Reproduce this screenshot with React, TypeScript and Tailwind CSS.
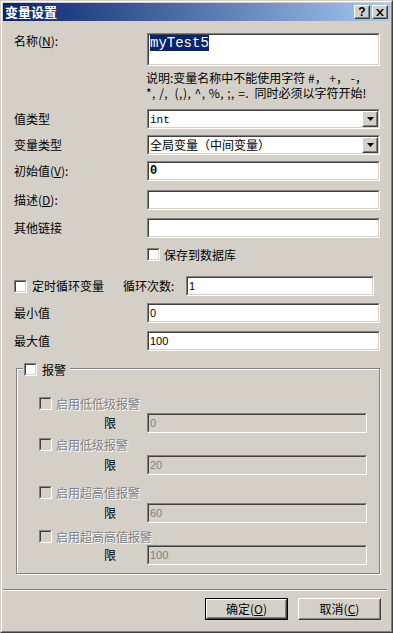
const sunkenOuter = "border border-t-[#808080] border-l-[#808080] border-r-white border-b-white";
const sunkenInner = "border border-t-[#404040] border-l-[#404040] border-r-[#d4d0c8] border-b-[#d4d0c8]";
const raisedOuter = "border border-t-white border-l-white border-r-[#404040] border-b-[#404040]";
const raisedInner = "border border-t-[#d4d0c8] border-l-[#d4d0c8] border-r-[#808080] border-b-[#808080]";

const grayText = "text-[#808080] [text-shadow:1px_1px_0_#fff]";

type FieldProps = {
  w?: string;
  h?: string;
  disabled?: boolean;
  children?: React.ReactNode;
};

const Field = ({ w = "w-[233px]", h = "h-[20px]", disabled, children }: FieldProps) => (
  <div className={`${sunkenOuter} ${w} ${h} shrink-0`}>
    <div
      className={`${sunkenInner} h-full flex items-center pl-[1px] text-[11px] font-['Liberation_Sans',sans-serif] ${
        disabled ? "bg-[#d4d0c8] text-[#808080]" : "bg-white text-black"
      }`}
    >
      {children}
    </div>
  </div>
);

const Check = ({ disabled }: { disabled?: boolean }) => (
  <div className={`${sunkenOuter} w-[13px] h-[13px] shrink-0`}>
    <div className={`${sunkenInner} h-full ${disabled ? "bg-[#d4d0c8]" : "bg-white"}`} />
  </div>
);

const Combo = ({ children }: { children: React.ReactNode }) => (
  <div className={`${sunkenOuter} w-[233px] h-[20px] shrink-0`}>
    <div className={`${sunkenInner} h-full bg-white flex items-center`}>
      <div className="flex-1 pl-[1px] whitespace-nowrap">{children}</div>
      <div className={`${raisedOuter} w-[16px] h-[16px] shrink-0`}>
        <div className={`${raisedInner} h-full bg-[#d4d0c8] flex items-center justify-center`}>
          <svg width="7" height="4" viewBox="0 0 7 4">
            <path d="M0 0h7l-3.5 4z" fill="#000" />
          </svg>
        </div>
      </div>
    </div>
  </div>
);

const Btn = ({ children, isDefault }: { children: React.ReactNode; isDefault?: boolean }) => (
  <div className={`w-[83px] h-[22px] ${isDefault ? "border border-black" : ""}`}>
    <div className={`${raisedOuter} h-full`}>
      <div className={`${raisedInner} h-full bg-[#d4d0c8] flex items-center justify-center text-[12px]`}>
        {children}
      </div>
    </div>
  </div>
);

const TitleBtn = ({ children }: { children: React.ReactNode }) => (
  <div className={`${raisedOuter} w-[16px] h-[14px]`}>
    <div className={`${raisedInner} h-full bg-[#d4d0c8] flex items-center justify-center`}>{children}</div>
  </div>
);

const Row = ({ label, mt, children }: { label: React.ReactNode; mt: string; children: React.ReactNode }) => (
  <div className={`flex items-center ${mt}`}>
    <div className="w-[133px] shrink-0">{label}</div>
    {children}
  </div>
);

const U = ({ c }: { c: string }) => <span className="underline underline-offset-1">{c}</span>;

const AlarmRow = ({ label, value, mt }: { label: string; value: string; mt: [string, string] }) => (
  <>
    <div className={`flex items-center h-[13px] pl-[22px] ${mt[0]}`}>
      <Check disabled />
      <span className={`ml-[4px] ${grayText}`}>{label}</span>
    </div>
    <div className={`flex items-center pl-[87px] ${mt[1]}`}>
      <span className="w-[43px]">限</span>
      <Field w="w-[220px]" disabled>
        {value}
      </Field>
    </div>
  </>
);

export default function App() {
  return (
    <div className="w-[393px] h-[633px] bg-[#d4d0c8] border border-t-[#d4d0c8] border-l-[#d4d0c8] border-r-[#404040] border-b-[#404040] font-['Noto_Sans_CJK_SC',sans-serif] text-[12px] leading-[14px] text-black">
      <div className="h-full border border-t-white border-l-white border-r-[#808080] border-b-[#808080] p-[1px] flex flex-col">
        {/* title bar */}
        <div className="h-[18px] shrink-0 bg-linear-to-r from-[#0a246a] to-[#a6caf0] flex items-center pl-[2px] pr-[2px]">
          <span className="flex-1 text-white font-bold text-[13px]">变量设置</span>
          <div className="flex gap-[2px]">
            <TitleBtn>
              <span className="font-['Liberation_Sans',sans-serif] font-bold text-[12px] leading-none">?</span>
            </TitleBtn>
            <TitleBtn>
              <svg width="8" height="7" viewBox="0 0 8 7">
                <path d="M0 0h2l2 2.5L6 0h2L5 3.5 8 7H6L4 4.5 2 7H0l3-3.5z" fill="#000" />
              </svg>
            </TitleBtn>
          </div>
        </div>

        {/* body */}
        <div className="flex-1 flex flex-col pl-[11px]">
          <div className="flex mt-[12px]">
            <div className="w-[133px] shrink-0 pt-[1px]">
              名称(<U c="N" />):
            </div>
            <Field h="h-[33px]">
              <div className="self-start">
                <span className="bg-[#0a246a] text-white font-['Liberation_Mono',monospace] text-[14px] leading-[17px]">
                  myTest5
                </span>
              </div>
            </Field>
          </div>

          <div className="mt-[4px] pl-[132px] whitespace-nowrap leading-[15px]">
            <div>说明:变量名称中不能使用字符 #， +， -，</div>
            <div>
              <span className="tracking-[0.5px]">*, /, &nbsp;(,), ^, %, ;, =.</span>&nbsp;&nbsp;同时必须以字符开始!
            </div>
          </div>

          <Row label="值类型" mt="mt-[9px]">
            <Combo>
              <span className="font-['Liberation_Mono',monospace] text-[11px]">int</span>
            </Combo>
          </Row>
          <Row label="变量类型" mt="mt-[6px]">
            <Combo>全局变量（中间变量）</Combo>
          </Row>
          <Row
            label={
              <>
                初始值(<U c="V" />):
              </>
            }
            mt="mt-[6px]"
          >
            <Field>
              <span className="font-['Liberation_Mono',monospace] font-bold text-[12px]">0</span>
            </Field>
          </Row>
          <Row
            label={
              <>
                描述(<U c="D" />):
              </>
            }
            mt="mt-[9px]"
          >
            <Field />
          </Row>
          <Row label="其他链接" mt="mt-[8px]">
            <Field />
          </Row>

          <div className="flex items-center h-[13px] mt-[10px] pl-[133px]">
            <Check />
            <span className="ml-[4px]">保存到数据库</span>
          </div>

          <div className="flex items-center h-[20px] mt-[15px]">
            <Check />
            <span className="ml-[5px] w-[91px]">定时循环变量</span>
            <span className="w-[63px]">循环次数:</span>
            <Field w="w-[188px]">1</Field>
          </div>

          <Row label="最小值" mt="mt-[7px]">
            <Field>0</Field>
          </Row>
          <Row label="最大值" mt="mt-[8px]">
            <Field>100</Field>
          </Row>

          {/* alarm group */}
          <div className="relative mt-[17px] ml-[2px] w-[364px] h-[206px] shrink-0 border border-[#808080] shadow-[inset_1px_1px_0_#fff,1px_1px_0_#fff] flex flex-col">
            <div className="absolute -top-[6px] left-[6px] bg-[#d4d0c8] flex items-center h-[13px] pl-[1px] pr-[4px]">
              <Check />
              <span className="ml-[5px]">报警</span>
            </div>
            <AlarmRow label="启用低低级报警" value="0" mt={["mt-[28px]", "mt-[3px]"]} />
            <AlarmRow label="启用低级报警" value="20" mt={["mt-[5px]", "mt-[4px]"]} />
            <AlarmRow label="启用超高值报警" value="60" mt={["mt-[11px]", "mt-[4px]"]} />
            <AlarmRow label="启用超高高值报警" value="100" mt={["mt-[7px]", "mt-[2px]"]} />
          </div>

          <div className="mt-[15px] -ml-[11px] w-[384px] h-[2px] border-t border-t-[#808080] border-b border-b-white" />

          <div className="flex justify-end gap-[10px] pr-[9px] mt-[7px]">
            <Btn isDefault>
              确定(<U c="O" />)
            </Btn>
            <Btn>
              取消(<U c="C" />)
            </Btn>
          </div>
        </div>
      </div>
    </div>
  );
}
